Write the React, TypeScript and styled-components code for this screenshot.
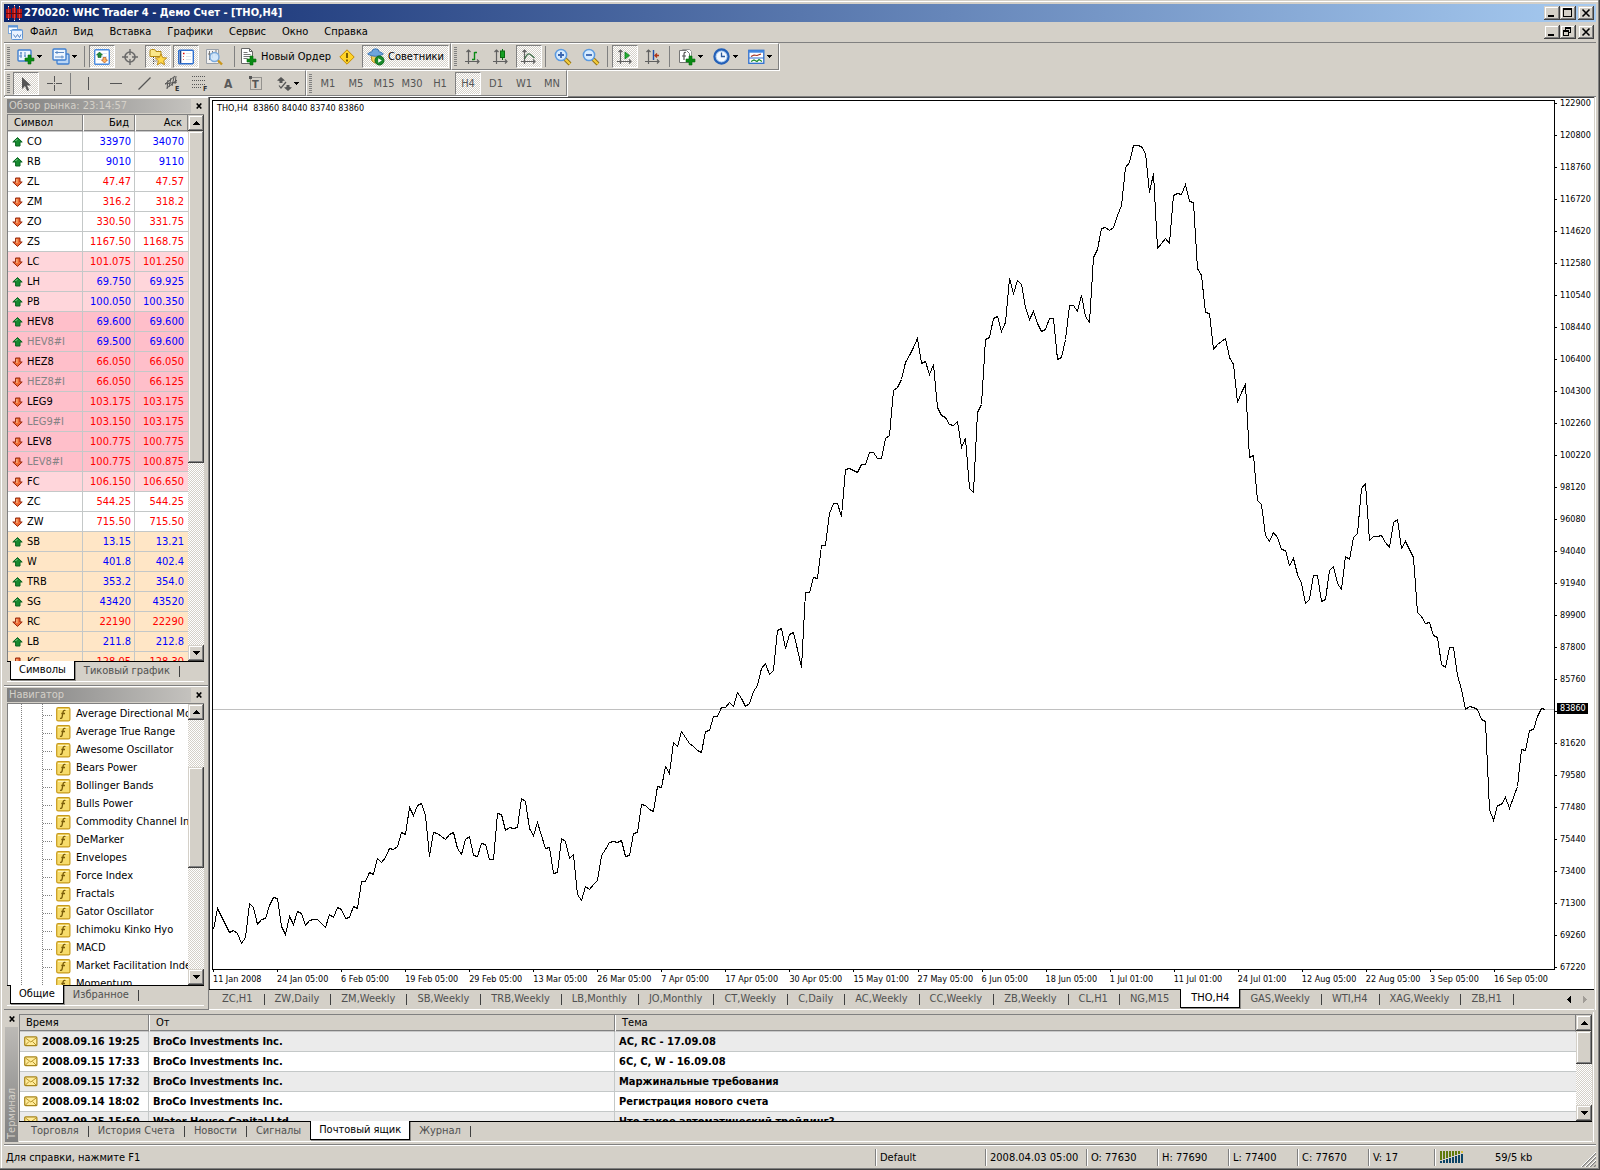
import React from "react";
import styled, { createGlobalStyle, css } from "styled-components";

const face = "#d4d0c8";
const shade = "#808080";
const dark = "#404040";
const dither = `repeating-conic-gradient(#ffffff 0% 25%, ${face} 0% 50%) 0 0 / 2px 2px`;
const raised = css`
  background: ${face};
  box-shadow: inset -1px -1px ${dark}, inset 1px 1px ${face}, inset -2px -2px ${shade}, inset 2px 2px #fff;
`;

const GlobalStyle = createGlobalStyle`
  * { box-sizing: border-box; }
  body {
    margin: 0;
    background: ${face};
    color: #000;
    font: 11px/14px "DejaVu Sans Condensed", "DejaVu Sans", Tahoma, sans-serif;
  }
  button { font: inherit; color: inherit; border: 0; padding: 0; background: none; white-space: nowrap; }
  h1, h2, ul, p { margin: 0; padding: 0; font: inherit; }
  ul { list-style: none; }
  svg { display: block; flex: none; }
`;

/* ---------- window frame ---------- */

const Frame = styled.div`
  height: 100vh;
  min-height: 720px;
  min-width: 1000px;
  display: flex;
  flex-direction: column;
  padding: 4px 4px 2px;
  background: ${face};
  box-shadow: inset -1px -1px ${dark}, inset -2px -2px ${shade}, inset 1px 1px ${face}, inset 2px 2px #fff;
`;

const TitleBar = styled.header`
  height: 18px;
  flex: none;
  display: flex;
  align-items: center;
  gap: 2px;
  padding: 0 2px;
  background: linear-gradient(90deg, #0a246a, #a6caf0);
`;

const Title = styled.h1`
  flex: 1;
  color: #fff;
  font-weight: bold;
`;

const CaptionButtons = styled.div`
  display: flex;
  button:last-child { margin-left: 2px; }
`;

const CaptionButton = styled.button`
  ${raised}
  width: 16px;
  height: 14px;
`;

const MenuBar = styled.nav`
  height: 20px;
  flex: none;
  display: flex;
  align-items: center;
  padding: 0 2px 0 4px;
`;

const MenuItems = styled.ul`
  flex: 1;
  display: flex;
  gap: 2px;
`;

const MenuButton = styled.button`
  padding: 0 7px;
  line-height: 18px;
`;

/* ---------- toolbars ---------- */

const Toolbars = styled.div`
  flex: none;
  border-top: 1px solid ${shade};
  border-bottom: 1px solid ${shade};
`;

const ToolRow = styled.div`
  display: flex;
  height: 27px;
  &:last-child { height: 26px; }
  &:last-child > div { padding-top: 1px; }
`;

const ToolGroup = styled.div`
  display: flex;
  align-items: center;
  gap: 2px;
  padding: 0 1px 0 2px;
  border: 1px solid ${shade};
  border-top-color: #fff;
  border-left-color: #fff;
  box-shadow: 1px 1px #fff;
`;

const Grip = styled.span`
  width: 3px;
  height: 19px;
  margin-right: 1px;
  background: repeating-linear-gradient(${shade} 0 1px, ${face} 1px 2px);
`;

const Separator = styled.span<{ $lead?: number }>`
  width: 1px;
  height: 21px;
  margin: 0 2px 0 ${(p) => p.$lead ?? 1}px;
  background: ${shade};
`;

const ToolButton = styled.button<{ $pressed?: boolean; $wide?: boolean }>`
  height: 23px;
  min-width: 26px;
  display: flex;
  align-items: center;
  justify-content: center;
  gap: 3px;
  border: 1px solid transparent;
  ${(p) => p.$wide && "padding: 0 4px;"}
  ${(p) => p.$pressed && css`
    background: ${dither};
    border-color: ${shade} #fff #fff ${shade};
  `}
`;

const DropButton = styled(ToolButton)`
  width: 33px;
  gap: 2px;
`;

const PeriodButton = styled(ToolButton)`
  color: #555;
`;

/* ---------- docked panels ---------- */

const Workspace = styled.main`
  flex: 1;
  min-height: 0;
  display: flex;
`;

const Sidebar = styled.aside`
  width: 204px;
  flex: none;
  display: flex;
  flex-direction: column;
`;

const Dock = styled.section<{ $height?: number }>`
  ${(p) => (p.$height ? `height: ${p.$height}px; flex: none;` : "flex: 1; min-height: 0;")}
  display: flex;
  flex-direction: column;
  padding: 1px 4px 3px 3px;
  border-top: 1px solid #fff;
  border-bottom: 1px solid ${shade};
`;

const DockHead = styled.div`
  display: flex;
  gap: 3px;
  height: 15px;
  flex: none;
  padding-bottom: 1px;
`;

const DockTitle = styled.h2`
  flex: 1;
  padding-left: 2px;
  line-height: 14px;
  color: ${face};
  background: linear-gradient(90deg, #808080, #c4c2be);
`;

const CloseButton = styled.button`
  width: 10px;
  height: 13px;
  display: flex;
  align-items: center;
  justify-content: center;
`;

const DockBody = styled.div`
  flex: 1;
  min-height: 0;
  display: flex;
  border: 1px solid ${shade};
  border-width: 1px 0 0 1px;
  background: #fff;
`;

const Scrollable = styled.div`
  flex: 1;
  min-width: 0;
  overflow: hidden;
`;

const TabStrip = styled.div<{ $indent: number }>`
  display: flex;
  flex: none;
  height: 21px;
  padding-left: ${(p) => p.$indent}px;
  border-top: 1px solid #000;
  border-bottom: 1px solid #fff;
`;

const Tab = styled.button<{ $active?: boolean; $roomy?: boolean }>`
  position: relative;
  height: 18px;
  padding: ${(p) => (p.$roomy ? "0 12px 0 10px" : "0 10px 0 9px")};
  color: #505050;
  &::after {
    content: "";
    position: absolute;
    right: 0;
    top: 4px;
    width: 1px;
    height: 11px;
    background: #404040;
  }
  ${(p) => p.$active && css`
    margin: -1px 0 0 -1px;
    height: 19px;
    color: #000;
    background: #fff;
    border: 1px solid #000;
    border-top: 0;
    padding: 0 ${p.$roomy ? 10 : 8}px;
    box-shadow: 1px 1px #8c8a86;
    &::after { content: none; }
  `}
`;

/* ---------- scroll bar ---------- */

const Track = styled.div`
  width: 16px;
  flex: none;
  display: flex;
  flex-direction: column;
  background: ${dither};
`;

const ScrollButton = styled.button`
  ${raised}
  height: 16px;
  flex: none;
  display: flex;
  align-items: center;
  justify-content: center;
`;

const TrackSpan = styled.span<{ $grow: number }>`
  flex: ${(p) => p.$grow} 1 0;
`;

const Thumb = styled(TrackSpan)`
  ${raised}
`;

/* ---------- tables ---------- */

const Table = styled.table`
  width: 100%;
  table-layout: fixed;
  border-collapse: separate;
  border-spacing: 0;
`;

const HeadCell = styled.th<{ $right?: boolean }>`
  height: 17px;
  padding: 0 5px 0 6px;
  font-weight: normal;
  text-align: ${(p) => (p.$right ? "right" : "left")};
  background: ${face};
  border-left: 1px solid #fff;
  border-right: 1px solid ${shade};
  border-bottom: 1px solid #c8c8c8;
  box-shadow: inset 0 -1px ${shade};
  &:first-child { border-left: 0; }
`;

const Cell = styled.td`
  height: 20px;
  padding: 0 3px 0 4px;
  white-space: nowrap;
  overflow: hidden;
  border-bottom: 1px solid #c4c8c8;
  border-right: 1px solid #c4c8c8;
  &:last-child { border-right: 0; padding-right: 4px; }
`;

const IconText = styled.span`
  display: flex;
  align-items: center;
  gap: 4px;
`;

const QuoteRow = styled.tr<{ $tone: Tone; $up: boolean; $muted?: boolean }>`
  background: ${(p) => toneColor[p.$tone]};
  color: ${(p) => (p.$muted ? "#848284" : "#000")};
  td + td { text-align: right; color: ${(p) => (p.$up ? "#0000ff" : "#ff0000")}; }
`;

const MailRow = styled.tr`
  font-weight: bold;
  &:nth-child(odd) { background: #ebebeb; }
`;

/* ---------- navigator tree ---------- */

const Tree = styled.ul`
  padding: 1px 0 0 48px;
  background-image: repeating-linear-gradient(#808080 0 1px, #fff 1px 2px),
    repeating-linear-gradient(#808080 0 1px, #fff 1px 2px);
  background-size: 1px 100%;
  background-position: 13px 0, 34px 0;
  background-repeat: no-repeat;
`;

const TreeItem = styled.li`
  position: relative;
  height: 18px;
  display: flex;
  align-items: center;
  gap: 5px;
  white-space: nowrap;
  &::before {
    content: "";
    position: absolute;
    left: -13px;
    top: 10px;
    width: 10px;
    height: 1px;
    background: repeating-linear-gradient(90deg, #808080 0 1px, #fff 1px 2px);
  }
`;

/* ---------- chart ---------- */

const ChartArea = styled.section`
  flex: 1;
  min-width: 0;
  display: flex;
  flex-direction: column;
  border-left: 1px solid ${shade};
  border-right: 1px solid #fff;
  padding-right: 1px;
`;

const ChartWindow = styled.div`
  flex: 1;
  min-height: 0;
  display: grid;
  grid-template: minmax(0, 1fr) 19px / minmax(0, 1fr) 39px;
  padding: 2px 0 0 2px;
  background: #fff;
  border-top: 1px solid ${dark};
  border-left: 1px solid ${dark};
`;

const Plot = styled.div`
  position: relative;
  border: 1px solid #000;
  svg { width: 100%; height: 100%; }
`;

const PlotTitle = styled.p`
  position: absolute;
  left: 4px;
  top: 2px;
  font-size: 9px;
  line-height: 11px;
  white-space: pre;
`;

const PriceAxis = styled.div`
  position: relative;
  display: flex;
  flex-direction: column;
  justify-content: space-between;
  margin: -2px 0;
`;

const PriceLabel = styled.span`
  position: relative;
  height: 10px;
  padding-left: 5px;
  font-size: 9px;
  line-height: 10px;
  &::before {
    content: "";
    position: absolute;
    left: 0;
    top: 5px;
    width: 2px;
    height: 1px;
    background: #000;
  }
`;

const CurrentPrice = styled.span`
  position: absolute;
  left: 2px;
  top: calc(70% - 7px);
  width: 31px;
  padding-left: 3px;
  font-size: 9px;
  line-height: 11px;
  color: #fff;
  background: #000;
`;

const TimeAxis = styled.div`
  display: grid;
  grid-template-columns: repeat(20, minmax(0, 64fr)) minmax(0, 61fr);
  padding-left: 1px;
`;

const TimeLabel = styled.span`
  position: relative;
  padding-top: 4px;
  font-size: 9px;
  line-height: 11px;
  white-space: nowrap;
  &::before {
    content: "";
    position: absolute;
    left: 0;
    top: 0;
    width: 1px;
    height: 2px;
    background: #000;
  }
`;

const ScrollArrows = styled.div`
  margin-left: auto;
  display: flex;
  align-items: center;
  gap: 12px;
  padding: 0 7px;
`;

/* ---------- terminal ---------- */

const Terminal = styled.section`
  flex: none;
  height: 134px;
  display: flex;
  padding: 2px 2px 2px 0;
`;

const TerminalRail = styled.div`
  width: 15px;
  display: flex;
  flex-direction: column;
  align-items: center;
  padding: 0 1px;
`;

const RailTitle = styled.h2`
  flex: 1;
  width: 13px;
  margin-top: 2px;
  padding-top: 3px;
  writing-mode: vertical-rl;
  transform: rotate(180deg);
  line-height: 13px;
  color: ${face};
  background: linear-gradient(0deg, #bcbab6, #808080);
`;

const TerminalMain = styled.div`
  flex: 1;
  min-width: 0;
  display: flex;
  flex-direction: column;
  border-right: 1px solid #fff;
  padding: 2px 1px 0 0;
`;

/* ---------- status bar ---------- */

const StatusBar = styled.footer`
  flex: none;
  height: 24px;
  display: grid;
  grid-template-columns: 1fr 110px 101px 71px 71px 69px 71px 66px 162px;
  align-items: center;
  border-top: 1px solid ${shade};
  box-shadow: inset 0 1px #fff;
  padding-top: 1px;
`;

const Pane = styled.span`
  height: 17px;
  line-height: 17px;
  padding-left: 4px;
  border-left: 1px solid ${shade};
  box-shadow: inset 1px 0 #fff;
  white-space: nowrap;
  &:first-child { border-left: 0; padding-left: 2px; box-shadow: none; }
`;

const TrafficPane = styled(Pane)`
  display: flex;
  align-items: center;
  gap: 31px;
  padding-left: 5px;
  > svg:last-child { margin: 4px 0 0 auto; }
`;

/* ---------- icons ---------- */

const Pic = ({ w = 18, h = 18, crisp, children }: { w?: number; h?: number; crisp?: boolean; children: React.ReactNode }) => (
  <svg width={w} height={h} viewBox={`0 0 ${w} ${h}`} fill="none" aria-hidden="true" shapeRendering={crisp ? "crispEdges" : undefined}>
    {children}
  </svg>
);

const Plus = ({ x, y }: { x: number; y: number }) => (
  <path d={`M${x + 3} ${y}h3v3h3v3h-3v3h-3v-3h-3v-3h3z`} fill="#0a8a14" stroke="#056b0c" strokeWidth=".6" />
);
const Caret = () => <Pic w={5} h={3} crisp><path d="M0 0h5v1h-5zM1 1h3v1h-3zM2 2h1v1h-1z" fill="#000" /></Pic>;
const Cross = () => <Pic w={6} h={6}><path d="M.7 .5l4.6 5M5.3 .5l-4.6 5" stroke="#000" strokeWidth="1.6" /></Pic>;
const Tri = ({ down }: { down?: boolean }) => (
  <Pic w={7} h={4} crisp>
    <path d={down ? "M0 0h7v1h-7zM1 1h5v1h-5zM2 2h3v1h-3zM3 3h1v1h-1z" : "M3 0h1v1h-1zM2 1h3v1h-3zM1 2h5v1h-5zM0 3h7v1h-7z"} fill="#000" />
  </Pic>
);
const Arrow = ({ left }: { left?: boolean }) => (
  <Pic w={4} h={7} crisp>
    <path d={left ? "M3 0h1v7h-1zM2 1h1v5h-1zM1 2h1v3h-1zM0 3h1v1h-1z" : "M0 0h1v7h-1zM1 1h1v5h-1zM2 2h1v3h-1zM3 3h1v1h-1z"} fill={left ? "#000" : "#a09c96"} />
  </Pic>
);

const CandlesLogo = () => (
  <Pic w={16} h={16} crisp>
    <path d="M2.500 1v14M8.500 0v16M13.500 1v14" stroke="#fff" strokeWidth="1" />
    <path d="M0 4h5v9h-5zM6 3h4v10h-4zM11 4h5v9h-5z" fill="#b01414" />
    <path d="M2.500 2v12M8.500 1v14M13.500 2v12" stroke="#e03a3a" strokeWidth="1" />
    <path d="M0 8.500h16" stroke="#700404" strokeWidth="1" />
  </Pic>
);
const MdiIcon = () => (
  <Pic w={15} h={15}>
    <rect x=".5" y=".5" width="9" height="8" fill="#fff" stroke="#7da7d9" />
    <path d="M0 1.5h10" stroke="#5d94d4" strokeWidth="2" />
    <path d="M2 5.500h2" stroke="#7da7d9" />
    <rect x="3.5" y="4.5" width="11" height="10" rx="1" fill="#eaf3ff" stroke="#5d94d4" />
    <path d="M4 5.5h10" stroke="#7fb0ea" />
    <path d="M5.500 9.500l2 3 2-3 2 3 1.500-3" stroke="#5b89c4" />
  </Pic>
);
const NewChart = () => (
  <Pic>
    <rect x="1" y="2" width="13" height="11" rx="1" fill="#eef6ff" stroke="#3f7fcf" strokeWidth="1.4" />
    <path d="M4 4v6M3 5h2M8 4v5M7 8h2M2 8h3" stroke="#5b89c4" />
    <Plus x={8} y={7} />
  </Pic>
);
const Profiles = () => (
  <Pic>
    <rect x="5" y="6" width="12" height="10" rx="1" fill="#bcd7f5" stroke="#3f7fcf" strokeWidth="1.3" />
    <rect x="1" y="1" width="13" height="11" rx="1" fill="#eef6ff" stroke="#3f7fcf" strokeWidth="1.4" />
    <path d="M3 4.500h9M3 9h9M5 3v3M10 7.500v3" stroke="#5b89c4" />
  </Pic>
);
const WatchIcon = () => (
  <Pic w={16} h={16}>
    <rect x=".7" y=".7" width="14.600" height="14.600" rx="1" fill="#fff" stroke="#4a8be0" strokeWidth="1.4" />
    <path d="M3 4.500h10M3 7.500h10M3 10.500h10" stroke="#dbe8f8" />
    <path d="M5.500 3l3 3h-1.500v2.500h-3v-2.500h-1.500z" fill="#1f8a3a" stroke="#0b5f1c" strokeWidth=".6" />
    <path d="M10.500 14l-3-3h1.500v-2.500h3v2.500h1.500z" fill="#ffb45e" stroke="#b4581c" strokeWidth=".7" />
  </Pic>
);
const Target = () => (
  <Pic w={16} h={16}>
    <circle cx="8" cy="8" r="5" stroke="#6a6a6a" strokeWidth="1.600" />
    <path d="M8 0v6M8 10v6M0 8h6M10 8h6" stroke="#6a6a6a" strokeWidth="1.400" />
  </Pic>
);
const StarFolder = () => (
  <Pic>
    <path d="M1 3q0-1.500 1.500-1.500h3l1.500 2h5v5h-11z" fill="#fae88a" stroke="#b48a12" />
    <path d="M4.500 9v7M4.500 13h4" stroke="#444" strokeDasharray="1 1" />
    <path d="M12 6l1.700 3.600 4 .4-3 2.700.9 4.100-3.600-2.100-3.600 2.100.9-4.100-3-2.700 4-.4z" fill="#ffd94a" stroke="#b9840f" strokeWidth=".9" />
  </Pic>
);
const NavIcon = () => (
  <Pic w={16} h={16}>
    <rect x=".7" y="1.200" width="14.600" height="13.600" rx="1" fill="#fff" stroke="#2d6fd0" strokeWidth="1.400" />
    <path d="M2.500 2v12" stroke="#1d3f80" strokeWidth="1.600" />
    <path d="M5 4.500h1.500" stroke="#e00000" strokeWidth="1.600" />
    <path d="M8 4.500h5M8 7.500h5M8 10.500h5" stroke="#dfe6ee" />
    <path d="M5 7.500h1M5 10.500h1" stroke="#e06060" />
  </Pic>
);
const TesterIcon = () => (
  <Pic>
    <path d="M1.500 1.500h12v14h-12z" fill="#f2f2f2" stroke="#9aa0a8" />
    <path d="M4.500 3v9M7.500 3v7M11 2v6M3 6h3M7 5h3" stroke="#777" />
    <circle cx="9.500" cy="9" r="4.500" fill="#cfe6fb" fillOpacity=".9" stroke="#7aa9dc" strokeWidth="1.400" />
    <path d="M13 12.500l4 4" stroke="#c9961c" strokeWidth="2.400" />
  </Pic>
);
const OrderIcon = () => (
  <Pic>
    <path d="M1.500 .5h8l3 3v12h-11z" fill="#fff" stroke="#666" />
    <path d="M9.500 .5v3h3" stroke="#666" />
    <path d="M3.500 4.500h4M3.500 6.500h7M3.500 8.500h7M3.500 10.500h4" stroke="#777" />
    <Plus x={7} y={8} />
  </Pic>
);
const AlertIcon = () => (
  <Pic w={16} h={16}>
    <path d="M8 .8l7.200 7.200-7.200 7.200-7.200-7.200z" fill="#ffd429" stroke="#c58b00" strokeLinejoin="round" />
    <path d="M8 4v5M8 10.500v2" stroke="#6d5200" strokeWidth="1.800" />
  </Pic>
);
const ExpertIcon = () => (
  <Pic>
    <path d="M4 7h9l-1 6q-3.500 4-7 0z" fill="#f3cf58" stroke="#b18a1e" />
    <path d="M.7 6q1-2 4-2 .5-3.200 3.800-3.200t3.800 3.200q3 0 4 2-3.500 2.300-7.800 2.300t-7.800-2.300z" fill="#6ea5dc" stroke="#3a75b5" />
    <circle cx="12.500" cy="12.500" r="4.500" fill="#1a8a2c" stroke="#0b6c18" />
    <path d="M11.200 10.200l3.600 2.300-3.600 2.300z" fill="#fff" />
  </Pic>
);
const Axes = () => <path d="M3.500 1v14M0 12.500h14M1.500 3l2-2 2 2M12 10.500l2 2-2 2" stroke="#606060" strokeWidth="1.200" />;
const BarsIcon = () => <Pic w={15} h={16}><Axes /><path d="M9.500 3v8M7 10.500h2.500M9.500 3.500h2.500" stroke="#0a8a14" strokeWidth="1.400" /></Pic>;
const CandleIcon = () => <Pic w={15} h={16}><Axes /><path d="M9.500 0v11" stroke="#0a6b10" /><rect x="7.500" y="2" width="4" height="6.500" fill="#16a024" stroke="#0a6b10" /></Pic>;
const LineIcon = () => <Pic w={15} h={16}><Axes /><path d="M3.500 10q3-6 5-5t5 4" stroke="#3a6a44" strokeWidth="1.200" /></Pic>;
const ScrollIcon = () => <Pic w={15} h={16}><Axes /><path d="M8 3l4.500 3.500-4.500 3.500z" fill="#22b032" stroke="#0b7a18" strokeWidth=".8" /></Pic>;
const ShiftIcon = () => <Pic w={15} h={16}><Axes /><path d="M8.500 1v10" stroke="#1f4fae" strokeWidth="1.400" /><path d="M14 6.500h-4M12 4.500l-2 2 2 2" stroke="#b0361a" strokeWidth="1.400" /></Pic>;
const ZoomIcon = ({ plus }: { plus?: boolean }) => (
  <Pic>
    <path d="M11 11l5 5" stroke="#8c6a10" strokeWidth="4" />
    <path d="M11 11l5 5" stroke="#f3cc3c" strokeWidth="2.400" />
    <circle cx="7" cy="7" r="5.600" fill="#d8ecff" stroke="#5b9ae0" strokeWidth="1.500" />
    <path d={plus ? "M4 7h6M7 4v6" : "M4 7h6"} stroke="#3a66b0" strokeWidth="1.800" />
  </Pic>
);
const IndicatorIcon = () => (
  <Pic>
    <path d="M4.500 3.500v-2h7l2 2v8h-2" fill="#fff" stroke="#999" />
    <path d="M1.500 2.500h7l3 3v9h-10z" fill="#fff" stroke="#777" />
    <path d="M8 4.500q-2-1-2 2v5.500M4 8h4" stroke="#555" strokeWidth="1.200" />
    <Plus x={8} y={8} />
  </Pic>
);
const ClockIcon = () => (
  <Pic>
    <circle cx="8.500" cy="8.500" r="7" fill="#f2f8ff" stroke="#2360b8" strokeWidth="2.400" />
    <circle cx="8.500" cy="8.500" r="5.500" stroke="#8ab6ea" strokeWidth=".8" />
    <path d="M8.500 4.500v4h3.500" stroke="#2b5a9c" strokeWidth="1.300" />
  </Pic>
);
const TemplateIcon = () => (
  <Pic w={17} h={16}>
    <rect x=".8" y="1.300" width="15" height="13" fill="#fff" stroke="#2d6fd0" strokeWidth="1.300" />
    <path d="M1 2.500h15" stroke="#3f86e0" strokeWidth="2.400" />
    <path d="M1 9h15" stroke="#2d6fd0" />
    <path d="M3 7.500l3-1.500 3 .5 4-1.500" stroke="#a02a1a" strokeWidth="1.200" />
    <path d="M3 12.500l3-1.500 3 1.500 2-2 3 2" stroke="#1a8a2a" strokeWidth="1.200" />
  </Pic>
);
const CursorIcon = () => <Pic w={12} h={16}><path d="M2 1v12l3-3 2.200 5 2-1-2.200-4.600h4z" fill="#555" /></Pic>;
const CrossIcon = () => <Pic w={15} h={15} crisp><path d="M7 0h1v6h-1zM7 9h1v6h-1zM0 7h6v1h-6zM9 7h6v1h-6zM7 7h1v1h-1z" fill="#555" /></Pic>;
const VLine = () => <Pic w={12} h={13} crisp><path d="M6 0h1v13h-1z" fill="#555" /></Pic>;
const HLine = () => <Pic w={12} h={13} crisp><path d="M0 6h12v1h-12z" fill="#555" /></Pic>;
const TrendLine = () => <Pic w={13} h={13}><path d="M.5 12.500l12-12" stroke="#555" strokeWidth="1.200" /></Pic>;
const ChannelIcon = () => (
  <Pic w={17} h={17}>
    <path d="M1 9l10-8M3 13l10-8M4 5l-1 9M7 3l-2 9M10 2l-2 9M12 1l-1 8M1 9l12-2" stroke="#555" />
    <text x="11" y="16" fontSize="7" fontWeight="bold" fill="#333">E</text>
  </Pic>
);
const FiboIcon = () => (
  <Pic w={17} h={17}>
    <path d="M0 1.500h14M0 5.500h14M0 9.500h14M0 12.500h9" stroke="#555" strokeDasharray="1 1" />
    <text x="11" y="16" fontSize="7" fontWeight="bold" fill="#333">F</text>
  </Pic>
);
const TextIcon = () => <Pic w={11} h={13}><text x="1" y="11" fontSize="12" fontWeight="bold" fill="#5a5a5a">A</text></Pic>;
const LabelIcon = () => (
  <Pic w={14} h={15}>
    <rect x="1.500" y="1.500" width="11" height="12" stroke="#555" strokeDasharray="1 1" />
    <path d="M0 0h3v3h-3z" fill="#555" />
    <text x="3" y="12" fontSize="11" fontWeight="bold" fill="#555">T</text>
  </Pic>
);
const ShapesIcon = () => (
  <Pic w={15} h={14}>
    <path d="M4 0l4 3.500-2.500.5v2h-3v-2l-2.500-.5zM11 14l-4-3.500 2.500-.5v-2h3v2l2.500.5z" fill="#555" />
    <path d="M2 8.500l2 2.500 5-6" stroke="#555" strokeWidth="1.200" />
  </Pic>
);
const QuoteArrow = ({ up }: { up: boolean }) => (
  <Pic w={11} h={10}>
    {up ? (
      <path d="M5.500 .6l4.700 4.400h-2.200v4h-4.400v-4h-2.800z" fill="#178a30" stroke="#0b6420" strokeLinejoin="round" />
    ) : (
      <path d="M5.500 9.400l4.700-4.400h-2.200v-4h-4.400v4h-2.800z" fill="#ee6a34" stroke="#962408" strokeLinejoin="round" />
    )}
    <path d={up ? "M3.500 4l2-2" : "M4.900 2v4"} stroke={up ? "#8ed49c" : "#ffcf9c"} />
  </Pic>
);
const FunctionIcon = () => (
  <Pic w={15} h={15}>
    <rect x=".7" y=".7" width="13.200" height="13.200" rx="1.500" fill="#f7dc6c" stroke="#c79a1c" strokeWidth="1.200" />
    <path d="M2 2.500h10.500" stroke="#fff3b8" />
    <path d="M9.500 3.500q-2-.8-2.400 1.500l-1 5q-.4 1.800-2 1.200M5.300 6.500h3.700" stroke="#7a5c08" strokeWidth="1.300" />
  </Pic>
);
const MailIcon = () => (
  <Pic w={14} h={11}>
    <rect x=".7" y=".9" width="12.200" height="8.800" rx="1" fill="#ffeb9a" stroke="#a8861c" strokeWidth="1.200" />
    <path d="M1.500 2l5.300 4 5.300-4M1.500 9l3.500-3.500M12 9l-3.500-3.500" stroke="#b8962c" />
  </Pic>
);
const TrafficIcon = () => (
  <Pic w={24} h={12} crisp>
    {[0, 1, 2, 3, 4, 5, 6, 7].map((i) => (
      <g key={i}>
        <rect x={i * 3} y="0" width="2" height={i === 7 ? 2 : 9 - i} fill={i === 7 ? "#d8c040" : "#5e7a0a"} />
        <rect x={i * 3} y={i === 7 ? 3 : 10 - i} width="2" height={i === 7 ? 9 : 2 + i} fill="#0c4466" />
      </g>
    ))}
  </Pic>
);
const ResizeGrip = () => (
  <Pic w={15} h={15}>
    <path d="M1 15l14-14M5 15l10-10M9 15l6-6M13 15l2-2" stroke="#808080" strokeWidth="1.400" />
    <path d="M0 15l15-15M4 15l11-11M8 15l7-7" stroke="#fff" />
  </Pic>
);
const MinGlyph = () => <Pic w={16} h={14} crisp><path d="M4 9h6v2h-6z" fill="#000" /></Pic>;
const MaxGlyph = () => <Pic w={16} h={14} crisp><path d="M3 2h9v9h-9zM4 4v6h7v-6z" fill="#000" fillRule="evenodd" /></Pic>;
const RestoreGlyph = () => <Pic w={16} h={14} crisp><path d="M5 2h6v6h-2v3h-6v-6h2zM6 4v1h3v2h1v-3zM4 7v3h4v-3z" fill="#000" fillRule="evenodd" /></Pic>;
const CloseGlyph = () => <Pic w={16} h={14}><path d="M4.500 3.500l7 7M11.500 3.500l-7 7" stroke="#000" strokeWidth="1.600" /></Pic>;

/* ---------- data ---------- */

type Tone = "white" | "rose" | "pink" | "sand";
const toneColor: Record<Tone, string> = { white: "#ffffff", rose: "#ffd6db", pink: "#ffbfca", sand: "#ffe6c6" };

type Quote = [symbol: string, bid: string, ask: string, up: boolean, tone: Tone];
const quotes: Quote[] = [
  ["CO", "33970", "34070", true, "white"],
  ["RB", "9010", "9110", true, "white"],
  ["ZL", "47.47", "47.57", false, "white"],
  ["ZM", "316.2", "318.2", false, "white"],
  ["ZO", "330.50", "331.75", false, "white"],
  ["ZS", "1167.50", "1168.75", false, "white"],
  ["LC", "101.075", "101.250", false, "rose"],
  ["LH", "69.750", "69.925", true, "rose"],
  ["PB", "100.050", "100.350", true, "rose"],
  ["HEV8", "69.600", "69.600", true, "pink"],
  ["HEV8#I", "69.500", "69.600", true, "pink"],
  ["HEZ8", "66.050", "66.050", false, "pink"],
  ["HEZ8#I", "66.050", "66.125", false, "pink"],
  ["LEG9", "103.175", "103.175", false, "pink"],
  ["LEG9#I", "103.150", "103.175", false, "pink"],
  ["LEV8", "100.775", "100.775", false, "pink"],
  ["LEV8#I", "100.775", "100.875", false, "pink"],
  ["FC", "106.150", "106.650", false, "rose"],
  ["ZC", "544.25", "544.25", false, "white"],
  ["ZW", "715.50", "715.50", false, "white"],
  ["SB", "13.15", "13.21", true, "sand"],
  ["W", "401.8", "402.4", true, "sand"],
  ["TRB", "353.2", "354.0", true, "sand"],
  ["SG", "43420", "43520", true, "sand"],
  ["RC", "22190", "22290", false, "sand"],
  ["LB", "211.8", "212.8", true, "sand"],
  ["KC", "128.05", "128.30", false, "sand"],
];

const indicators = [
  "Average Directional Movement Index", "Average True Range", "Awesome Oscillator", "Bears Power",
  "Bollinger Bands", "Bulls Power", "Commodity Channel Index", "DeMarker", "Envelopes", "Force Index",
  "Fractals", "Gator Oscillator", "Ichimoku Kinko Hyo", "MACD", "Market Facilitation Index", "Momentum",
];

const menus = ["Файл", "Вид", "Вставка", "Графики", "Сервис", "Окно", "Справка"];
const periods = ["M1", "M5", "M15", "M30", "H1", "H4", "D1", "W1", "MN"];
const chartTabs = [
  "ZC,H1", "ZW,Daily", "ZM,Weekly", "SB,Weekly", "TRB,Weekly", "LB,Monthly", "JO,Monthly", "CT,Weekly",
  "C,Daily", "AC,Weekly", "CC,Weekly", "ZB,Weekly", "CL,H1", "NG,M15", "THO,H4", "GAS,Weekly", "WTI,H4",
  "XAG,Weekly", "ZB,H1",
];
const terminalTabs = ["Торговля", "История Счета", "Новости", "Сигналы", "Почтовый ящик", "Журнал"];

const mails = [
  ["2008.09.16 19:25", "BroCo Investments Inc.", "AC, RC - 17.09.08"],
  ["2008.09.15 17:33", "BroCo Investments Inc.", "6C, C, W - 16.09.08"],
  ["2008.09.15 17:32", "BroCo Investments Inc.", "Маржинальные требования"],
  ["2008.09.14 18:02", "BroCo Investments Inc.", "Регистрация нового счета"],
  ["2007.09.25 15:50", "Water House Capital Ltd.", "Что такое автоматический трейдинг?"],
];

const prices = [
  122900, 120800, 118760, 116720, 114620, 112580, 110540, 108440, 106400, 104300, 102260, 100220, 98120, 96080,
  94040, 91940, 89900, 87800, 85760, 0, 81620, 79580, 77480, 75440, 73400, 71300, 69260, 67220,
];
const times = [
  "11 Jan 2008", "24 Jan 05:00", "6 Feb 05:00", "19 Feb 05:00", "29 Feb 05:00", "13 Mar 05:00", "26 Mar 05:00",
  "7 Apr 05:00", "17 Apr 05:00", "30 Apr 05:00", "15 May 01:00", "27 May 05:00", "6 Jun 05:00", "18 Jun 05:00",
  "1 Jul 01:00", "11 Jul 01:00", "24 Jul 01:00", "12 Aug 05:00", "22 Aug 05:00", "3 Sep 05:00", "16 Sep 05:00",
];

// Closing prices as plot heights: each block counts thirds of a unit down from its own base.
const closes: [base: number, thirds: number[]][] = [
  [539, [868, 806, 828, 852, 877, 871, 879, 910, 892, 791, 803, 853, 839, 834, 797, 772, 776, 860, 883, 830, 853, 814,
    820, 857, 841, 838, 838, 850, 862, 824, 831, 802, 807, 835, 832, 799, 804, 724, 723, 698, 703, 656, 667, 652, 626,
    628, 620, 577, 582, 503, 525, 495, 490, 527, 649, 577, 581, 589, 598, 584, 577, 624, 643, 599, 590, 645, 650, 609,
    614, 658, 658, 520, 524, 571, 563, 566, 562, 475, 484, 565, 586, 548, 586, 625, 622, 700, 697, 596, 604, 655, 644,
    763, 781, 740, 747, 734, 721, 647, 629, 607, 604, 607, 601, 650, 646, 581, 576, 492, 497, 507, 514, 439, 442, 380,
    401, 308, 319]],
  [299, [994, 1013, 1029, 1040, 1050, 1056, 995, 990, 950, 948, 923, 922, 907, 919, 877, 894, 918, 911, 873, 856, 806,
    791, 822, 811, 690, 685, 745, 703, 697, 748, 802, 577, 577, 532, 536, 436, 436, 340, 310, 310, 349, 208, 205, 210,
    217, 193, 193, 157, 157, 175, 175]],
  [219, [355, 347, 211, 201, 178, 127, 107, 81, 56, 130, 124, 163, 134, 262, 286, 291, 312, 316, 305, 382, 356, 505,
    517]],
  [-6, [952, 928, 732, 727, 669, 664, 710, 682, 550, 596, 556, 568, 636, 673, 650, 684, 709, 703, 670, 670, 793, 786,
    733, 631, 631, 648, 601, 664, 682, 487, 463, 401, 397, 405, 397, 361, 331, 217, 202, 151, 151, 154, 176, 293, 235,
    460, 445, 431, 445, 300, 295, 298, 268, 318, 322, 520, 541, 652, 656, 764, 749, 738, 730, 787, 808, 922, 892, 869]],
  [299, [171, 166, 301, 313, 405, 424, 397, 412, 447, 452, 497, 476, 524, 551, 610, 598, 526, 526, 604, 598, 512, 500,
    551, 568, 470, 477, 412, 401, 265, 251, 421, 409, 409, 406, 427, 441, 367, 359, 445, 425, 449, 472, 638, 649, 670,
    667, 706, 712, 794, 801, 742, 742, 825, 867, 927, 919, 921, 928, 957, 964, 1228, 1261, 1216, 1213, 1192, 1225,
    1192, 1158, 1048, 1051, 991, 988, 949, 925, 928]],
];
const linePoints = closes
  .flatMap(([base, thirds]) => thirds.map((t) => base + Math.floor(t / 3) + 0.5))
  .map((y, i) => `${i * 4 + 0.5},${y}`)
  .join(" ");

/* ---------- composed parts ---------- */

const ScrollBar = ({ before, thumb, after }: { before: number; thumb: number; after: number }) => (
  <Track>
    <ScrollButton aria-label="Вверх"><Tri /></ScrollButton>
    {before > 0 && <TrackSpan $grow={before} />}
    <Thumb $grow={thumb} />
    <TrackSpan $grow={after} />
    <ScrollButton aria-label="Вниз"><Tri down /></ScrollButton>
  </Track>
);

const WindowButtons = ({ restore }: { restore?: boolean }) => (
  <CaptionButtons>
    <CaptionButton aria-label="Свернуть"><MinGlyph /></CaptionButton>
    <CaptionButton aria-label="Развернуть">{restore ? <RestoreGlyph /> : <MaxGlyph />}</CaptionButton>
    <CaptionButton aria-label="Закрыть"><CloseGlyph /></CaptionButton>
  </CaptionButtons>
);

const MarketWatch = () => (
  <Dock>
    <DockHead>
      <DockTitle>Обзор рынка: 23:14:57</DockTitle>
      <CloseButton aria-label="Закрыть"><Cross /></CloseButton>
    </DockHead>
    <DockBody>
      <Scrollable>
        <Table>
          <colgroup><col width="75" /><col width="52" /><col width="53" /></colgroup>
          <thead>
            <tr><HeadCell>Символ</HeadCell><HeadCell $right>Бид</HeadCell><HeadCell $right>Аск</HeadCell></tr>
          </thead>
          <tbody>
            {quotes.map(([symbol, bid, ask, up, tone]) => (
              <QuoteRow key={symbol} $tone={tone} $up={up} $muted={symbol.endsWith("#I")}>
                <Cell><IconText><QuoteArrow up={up} />{symbol}</IconText></Cell>
                <Cell>{bid}</Cell>
                <Cell>{ask}</Cell>
              </QuoteRow>
            ))}
          </tbody>
        </Table>
      </Scrollable>
      <ScrollBar before={0} thumb={333} after={182} />
    </DockBody>
    <TabStrip $indent={4}>
      <Tab $active>Символы</Tab>
      <Tab>Тиковый график</Tab>
    </TabStrip>
  </Dock>
);

const Navigator = () => (
  <Dock $height={324}>
    <DockHead>
      <DockTitle>Навигатор</DockTitle>
      <CloseButton aria-label="Закрыть"><Cross /></CloseButton>
    </DockHead>
    <DockBody>
      <Scrollable>
        <Tree>
          {indicators.map((name) => <TreeItem key={name}><FunctionIcon />{name}</TreeItem>)}
        </Tree>
      </Scrollable>
      <ScrollBar before={47} thumb={101} after={101} />
    </DockBody>
    <TabStrip $indent={4}>
      <Tab $active>Общие</Tab>
      <Tab>Избранное</Tab>
    </TabStrip>
  </Dock>
);

const Chart = () => (
  <ChartArea>
    <ChartWindow>
      <Plot>
        <svg viewBox="0 0 1341 868" preserveAspectRatio="none" role="img" aria-label="THO,H4" shapeRendering="crispEdges">
          <path d="M0 608.500H1341" stroke="#c0c0c0" vectorEffect="non-scaling-stroke" />
          <polyline points={linePoints} fill="none" stroke="#000" vectorEffect="non-scaling-stroke" />
        </svg>
        <PlotTitle>{"THO,H4  83860 84040 83740 83860"}</PlotTitle>
      </Plot>
      <PriceAxis>
        {prices.map((p) => <PriceLabel key={p}>{p || ""}</PriceLabel>)}
        <CurrentPrice>83860</CurrentPrice>
      </PriceAxis>
      <TimeAxis>{times.map((t) => <TimeLabel key={t}>{t}</TimeLabel>)}</TimeAxis>
    </ChartWindow>
    <TabStrip $indent={3}>
      {chartTabs.map((t) => <Tab key={t} $roomy $active={t === "THO,H4"}>{t}</Tab>)}
      <ScrollArrows>
        <button aria-label="Назад"><Arrow left /></button>
        <button aria-label="Вперед" disabled><Arrow /></button>
      </ScrollArrows>
    </TabStrip>
  </ChartArea>
);

export default function App() {
  return (
    <>
      <GlobalStyle />
      <Frame>
        <TitleBar>
          <CandlesLogo />
          <Title>270020: WHC Trader 4 - Демо Счет - [THO,H4]</Title>
          <WindowButtons />
        </TitleBar>
        <MenuBar>
          <MdiIcon />
          <MenuItems>{menus.map((m) => <li key={m}><MenuButton>{m}</MenuButton></li>)}</MenuItems>
          <WindowButtons restore />
        </MenuBar>

        <Toolbars>
          <ToolRow>
            <ToolGroup>
              <Grip />
              <DropButton aria-label="Новый график"><NewChart /><Caret /></DropButton>
              <DropButton aria-label="Профили"><Profiles /><Caret /></DropButton>
              <Separator />
              <ToolButton $pressed aria-label="Обзор рынка"><WatchIcon /></ToolButton>
              <ToolButton aria-label="Окно данных"><Target /></ToolButton>
              <ToolButton $pressed aria-label="Навигатор"><StarFolder /></ToolButton>
              <ToolButton $pressed aria-label="Терминал"><NavIcon /></ToolButton>
              <ToolButton aria-label="Тестер"><TesterIcon /></ToolButton>
              <Separator $lead={5} />
              <ToolButton>
                <OrderIcon />Новый Ордер
              </ToolButton>
              <ToolButton aria-label="Внимание"><AlertIcon /></ToolButton>
              <ToolButton $pressed $wide><ExpertIcon />Советники</ToolButton>
            </ToolGroup>
            <ToolGroup>
              <Grip />
              <ToolButton aria-label="Бары"><BarsIcon /></ToolButton>
              <ToolButton aria-label="Свечи"><CandleIcon /></ToolButton>
              <ToolButton $pressed aria-label="Линия"><LineIcon /></ToolButton>
              <Separator />
              <ToolButton aria-label="Увеличить"><ZoomIcon plus /></ToolButton>
              <ToolButton aria-label="Уменьшить"><ZoomIcon /></ToolButton>
              <Separator />
              <ToolButton $pressed aria-label="Автопрокрутка"><ScrollIcon /></ToolButton>
              <ToolButton aria-label="Сдвиг графика"><ShiftIcon /></ToolButton>
              <Separator />
              <DropButton aria-label="Индикаторы"><IndicatorIcon /><Caret /></DropButton>
              <DropButton aria-label="Периоды"><ClockIcon /><Caret /></DropButton>
              <DropButton aria-label="Шаблоны"><TemplateIcon /><Caret /></DropButton>
            </ToolGroup>
          </ToolRow>
          <ToolRow>
            <ToolGroup>
              <Grip />
              <ToolButton $pressed aria-label="Курсор"><CursorIcon /></ToolButton>
              <ToolButton aria-label="Перекрестие"><CrossIcon /></ToolButton>
              <Separator />
              <ToolButton aria-label="Вертикальная линия"><VLine /></ToolButton>
              <ToolButton aria-label="Горизонтальная линия"><HLine /></ToolButton>
              <ToolButton aria-label="Трендовая линия"><TrendLine /></ToolButton>
              <ToolButton aria-label="Канал"><ChannelIcon /></ToolButton>
              <ToolButton aria-label="Фибоначчи"><FiboIcon /></ToolButton>
              <ToolButton aria-label="Текст"><TextIcon /></ToolButton>
              <ToolButton aria-label="Метка"><LabelIcon /></ToolButton>
              <DropButton aria-label="Стрелки"><ShapesIcon /><Caret /></DropButton>
            </ToolGroup>
            <ToolGroup>
              <Grip />
              {periods.map((p) => <PeriodButton key={p} $pressed={p === "H4"}>{p}</PeriodButton>)}
            </ToolGroup>
          </ToolRow>
        </Toolbars>

        <Workspace>
          <Sidebar>
            <MarketWatch />
            <Navigator />
          </Sidebar>
          <Chart />
        </Workspace>

        <Terminal>
          <TerminalRail>
            <CloseButton aria-label="Закрыть"><Cross /></CloseButton>
            <RailTitle>Терминал</RailTitle>
          </TerminalRail>
          <TerminalMain>
            <DockBody>
              <Scrollable>
                <Table>
                  <colgroup><col width="129" /><col width="466" /><col /></colgroup>
                  <thead>
                    <tr><HeadCell>Время</HeadCell><HeadCell>От</HeadCell><HeadCell>Тема</HeadCell></tr>
                  </thead>
                  <tbody>
                    {mails.map(([time, from, subject]) => (
                      <MailRow key={time}>
                        <Cell><IconText><MailIcon />{time}</IconText></Cell>
                        <Cell>{from}</Cell>
                        <Cell>{subject}</Cell>
                      </MailRow>
                    ))}
                  </tbody>
                </Table>
              </Scrollable>
              <ScrollBar before={0} thumb={33} after={42} />
            </DockBody>
            <TabStrip $indent={3}>
              {terminalTabs.map((t) => <Tab key={t} $active={t === "Почтовый ящик"}>{t}</Tab>)}
            </TabStrip>
          </TerminalMain>
        </Terminal>

        <StatusBar>
          <Pane>Для справки, нажмите F1</Pane>
          <Pane>Default</Pane>
          <Pane>2008.04.03 05:00</Pane>
          <Pane>O: 77630</Pane>
          <Pane>H: 77690</Pane>
          <Pane>L: 77400</Pane>
          <Pane>C: 77670</Pane>
          <Pane>V: 17</Pane>
          <TrafficPane><TrafficIcon />59/5 kb<ResizeGrip /></TrafficPane>
        </StatusBar>
      </Frame>
    </>
  );
}
